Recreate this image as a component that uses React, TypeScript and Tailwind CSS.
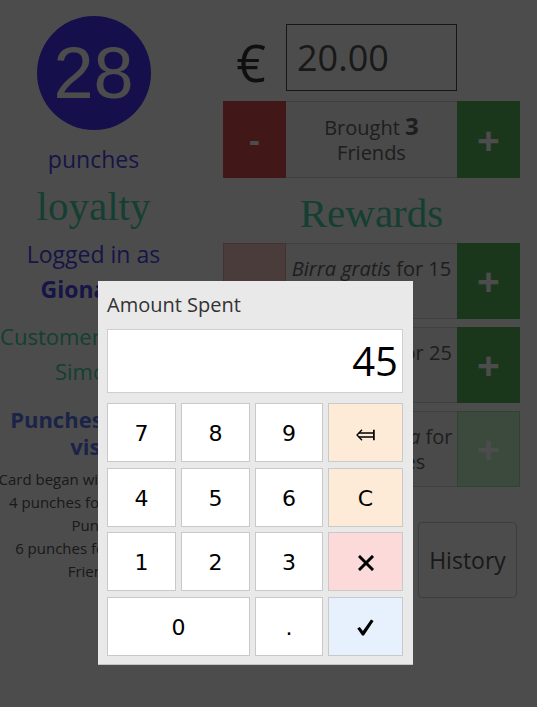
import type { ReactNode } from "react";

function Key({
  children,
  className = "",
}: {
  children: ReactNode;
  className?: string;
}) {
  return (
    <button
      type="button"
      className={`flex items-center justify-center border border-[#c9c9c9] pt-[3px] font-['DejaVu_Sans',sans-serif] text-[22px] leading-none text-black ${className}`}
    >
      {children}
    </button>
  );
}

function BackspaceIcon() {
  return (
    <svg width="19" height="12" viewBox="0 0 19 12" className="mt-[2px]" fill="none" stroke="black" strokeWidth="1.3">
      <path d="M6 0.8 L1 6 L6 11.2" />
      <path d="M3 4 H17.5 M3 8 H17.5" />
      <path d="M17.9 0.8 V11.2" strokeWidth="1.7" />
    </svg>
  );
}

function CrossIcon() {
  return (
    <svg width="16" height="16" viewBox="0 0 16 16" stroke="black" strokeWidth="3" strokeLinecap="square">
      <path d="M2 2 L14 14 M14 2 L2 14" />
    </svg>
  );
}

function CheckIcon() {
  return (
    <svg width="17" height="17" viewBox="0 0 17 17" fill="black">
      <path d="M0.3 9.6 L2.8 8.1 L5.9 12 L14 0.4 L16.6 1.9 L6.9 16.6 L5.1 16.6 Z" />
    </svg>
  );
}

function RewardRow({
  name,
  rest,
  second,
  disabled = false,
}: {
  name: string;
  rest: string;
  second: string;
  disabled?: boolean;
}) {
  return (
    <div className="flex h-[76px]">
      <button type="button" className="w-[63px] shrink-0 border border-[#e3a3a3] bg-[#fac8c8]" />
      <div className="flex w-[171px] shrink-0 flex-col items-center justify-center border-y border-[#d5d5d5] bg-[#f7f7f7] text-[20px] leading-[25px] text-[#666]">
        <p className="whitespace-nowrap">
          <i>{name}</i> {rest}
        </p>
        <p className="whitespace-nowrap">{second}</p>
      </div>
      <button
        type="button"
        className={
          disabled
            ? "flex w-[63px] shrink-0 items-center justify-center border border-[#a6dca9] bg-[#c8f7cb] text-[40px] font-bold leading-none text-white"
            : "flex w-[63px] shrink-0 items-center justify-center bg-[#5cb85c] text-[40px] font-bold leading-none text-white"
        }
      >
        +
      </button>
    </div>
  );
}

export default function App() {
  return (
    <div className="relative min-h-screen bg-white font-['Open_Sans',sans-serif]">
      <div className="flex">
        {/* left column */}
        <div className="flex w-[187px] shrink-0 flex-col items-center pt-[16px]">
          <div className="flex h-[114px] w-[114px] items-center justify-center rounded-full bg-[#4632ff] font-['Liberation_Sans',sans-serif] text-[72px] leading-none text-white">
            28
          </div>
          <p className="mt-[13px] whitespace-nowrap text-[23px] leading-[33px] text-[#4d47ee]">punches</p>
          <p className="mt-[6px] whitespace-nowrap font-['Liberation_Serif',serif] text-[41px] leading-[48px] text-[#45d4a6]">
            loyalty
          </p>
          <div className="mt-[7px] flex flex-col items-center text-[23px] leading-[35px] text-[#4d47ee]">
            <p className="whitespace-nowrap">Logged in as</p>
            <p className="whitespace-nowrap font-bold">Gionatan</p>
          </div>
          <div className="mt-[12px] flex flex-col items-center text-[22px] leading-[35px] text-[#45d4a6]">
            <p className="whitespace-nowrap">Customer card for</p>
            <p className="whitespace-nowrap">Simone</p>
          </div>
          <div className="mt-[17px] flex flex-col items-center text-[22px] font-bold leading-[27px] text-[#5a78f0]">
            <p className="whitespace-nowrap">Punches in this</p>
            <p className="whitespace-nowrap">visit</p>
          </div>
          <div className="mt-[8px] flex flex-col items-center text-[15px] leading-[23px] text-[#555]">
            <p className="whitespace-nowrap">Card began with 8 punches</p>
            <p className="whitespace-nowrap">4 punches for €20 spent</p>
            <p className="whitespace-nowrap">Punch</p>
            <p className="whitespace-nowrap">6 punches for Brought</p>
            <p className="whitespace-nowrap">Friends</p>
          </div>
        </div>

        {/* right column */}
        <div className="ml-[36px] flex w-[297px] shrink-0 flex-col pt-[24px]">
          <div className="flex h-[67px]">
            <div className="w-[63px] shrink-0 pt-[12px] pr-[7px] text-center text-[52px] leading-none text-[#333]">€</div>
            <div className="flex w-[171px] items-center border border-[#4a4a4a] pl-[10px] text-[36px] leading-none text-[#555]">
              20.00
            </div>
          </div>

          <div className="mt-[10px] flex h-[77px]">
            <button type="button" className="flex w-[63px] shrink-0 items-center justify-center bg-[#d9534f] text-[32px] font-bold leading-none text-white">
              -
            </button>
            <div className="flex w-[171px] shrink-0 flex-col items-center justify-center border-y border-[#d5d5d5] bg-[#f7f7f7] text-[20px] leading-[25px] text-[#666]">
              <p className="whitespace-nowrap">
                Brought <span className="text-[24px] font-bold leading-[20px]">3</span>
              </p>
              <p>Friends</p>
            </div>
            <button type="button" className="flex w-[63px] shrink-0 items-center justify-center bg-[#5cb85c] text-[40px] font-bold leading-none text-white">
              +
            </button>
          </div>

          <p className="mt-[11px] text-center font-['Liberation_Serif',serif] text-[41px] leading-[48px] text-[#45d4a6]">
            Rewards
          </p>

          <div className="mt-[6px] flex flex-col gap-[8px]">
            <RewardRow name="Birra gratis" rest="for 15" second="punches" />
            <RewardRow name="Pizza gratis" rest="for 25" second="punches" />
            <RewardRow name="Pizza e grappa" rest="for" second="30 punches" disabled />
          </div>

          <div className="mt-[35px] flex justify-end pr-[3px]">
            <button
              type="button"
              className="h-[76px] w-[99px] rounded-[4px] border border-[#cccccc] bg-white text-[23px] text-[#555]"
            >
              History
            </button>
          </div>
        </div>
      </div>

      {/* overlay */}
      <div className="fixed inset-0 z-10 bg-black/70" />

      {/* amount dialog */}
      <div className="absolute left-[98px] top-[281px] z-20 w-[315px] border-b border-[#c4c4c4] bg-[#e9e9e9] pl-[9px] pr-[10px] pt-[10px] pb-[8px]">
        <p className="text-[20px] leading-[28px] text-[#333]">Amount Spent</p>
        <div className="mt-[10px] flex h-[64px] items-center justify-end border border-[#cfcfcf] bg-white pr-[4px] text-[40px] leading-none text-black">
          45
        </div>
        <div className="mt-[10px] grid grid-cols-[69px_69px_68px_75px] auto-rows-[59px] gap-x-[5px] gap-y-[5.5px]">
          <Key className="bg-white">7</Key>
          <Key className="bg-white">8</Key>
          <Key className="bg-white">9</Key>
          <Key className="bg-[#fdebd8]">
            <BackspaceIcon />
          </Key>
          <Key className="bg-white">4</Key>
          <Key className="bg-white">5</Key>
          <Key className="bg-white">6</Key>
          <Key className="bg-[#fdebd8]">C</Key>
          <Key className="bg-white">1</Key>
          <Key className="bg-white">2</Key>
          <Key className="bg-white">3</Key>
          <Key className="bg-[#fddada]">
            <CrossIcon />
          </Key>
          <Key className="col-span-2 bg-white">0</Key>
          <Key className="bg-white">.</Key>
          <Key className="bg-[#e6f1fd]">
            <CheckIcon />
          </Key>
        </div>
      </div>
    </div>
  );
}
